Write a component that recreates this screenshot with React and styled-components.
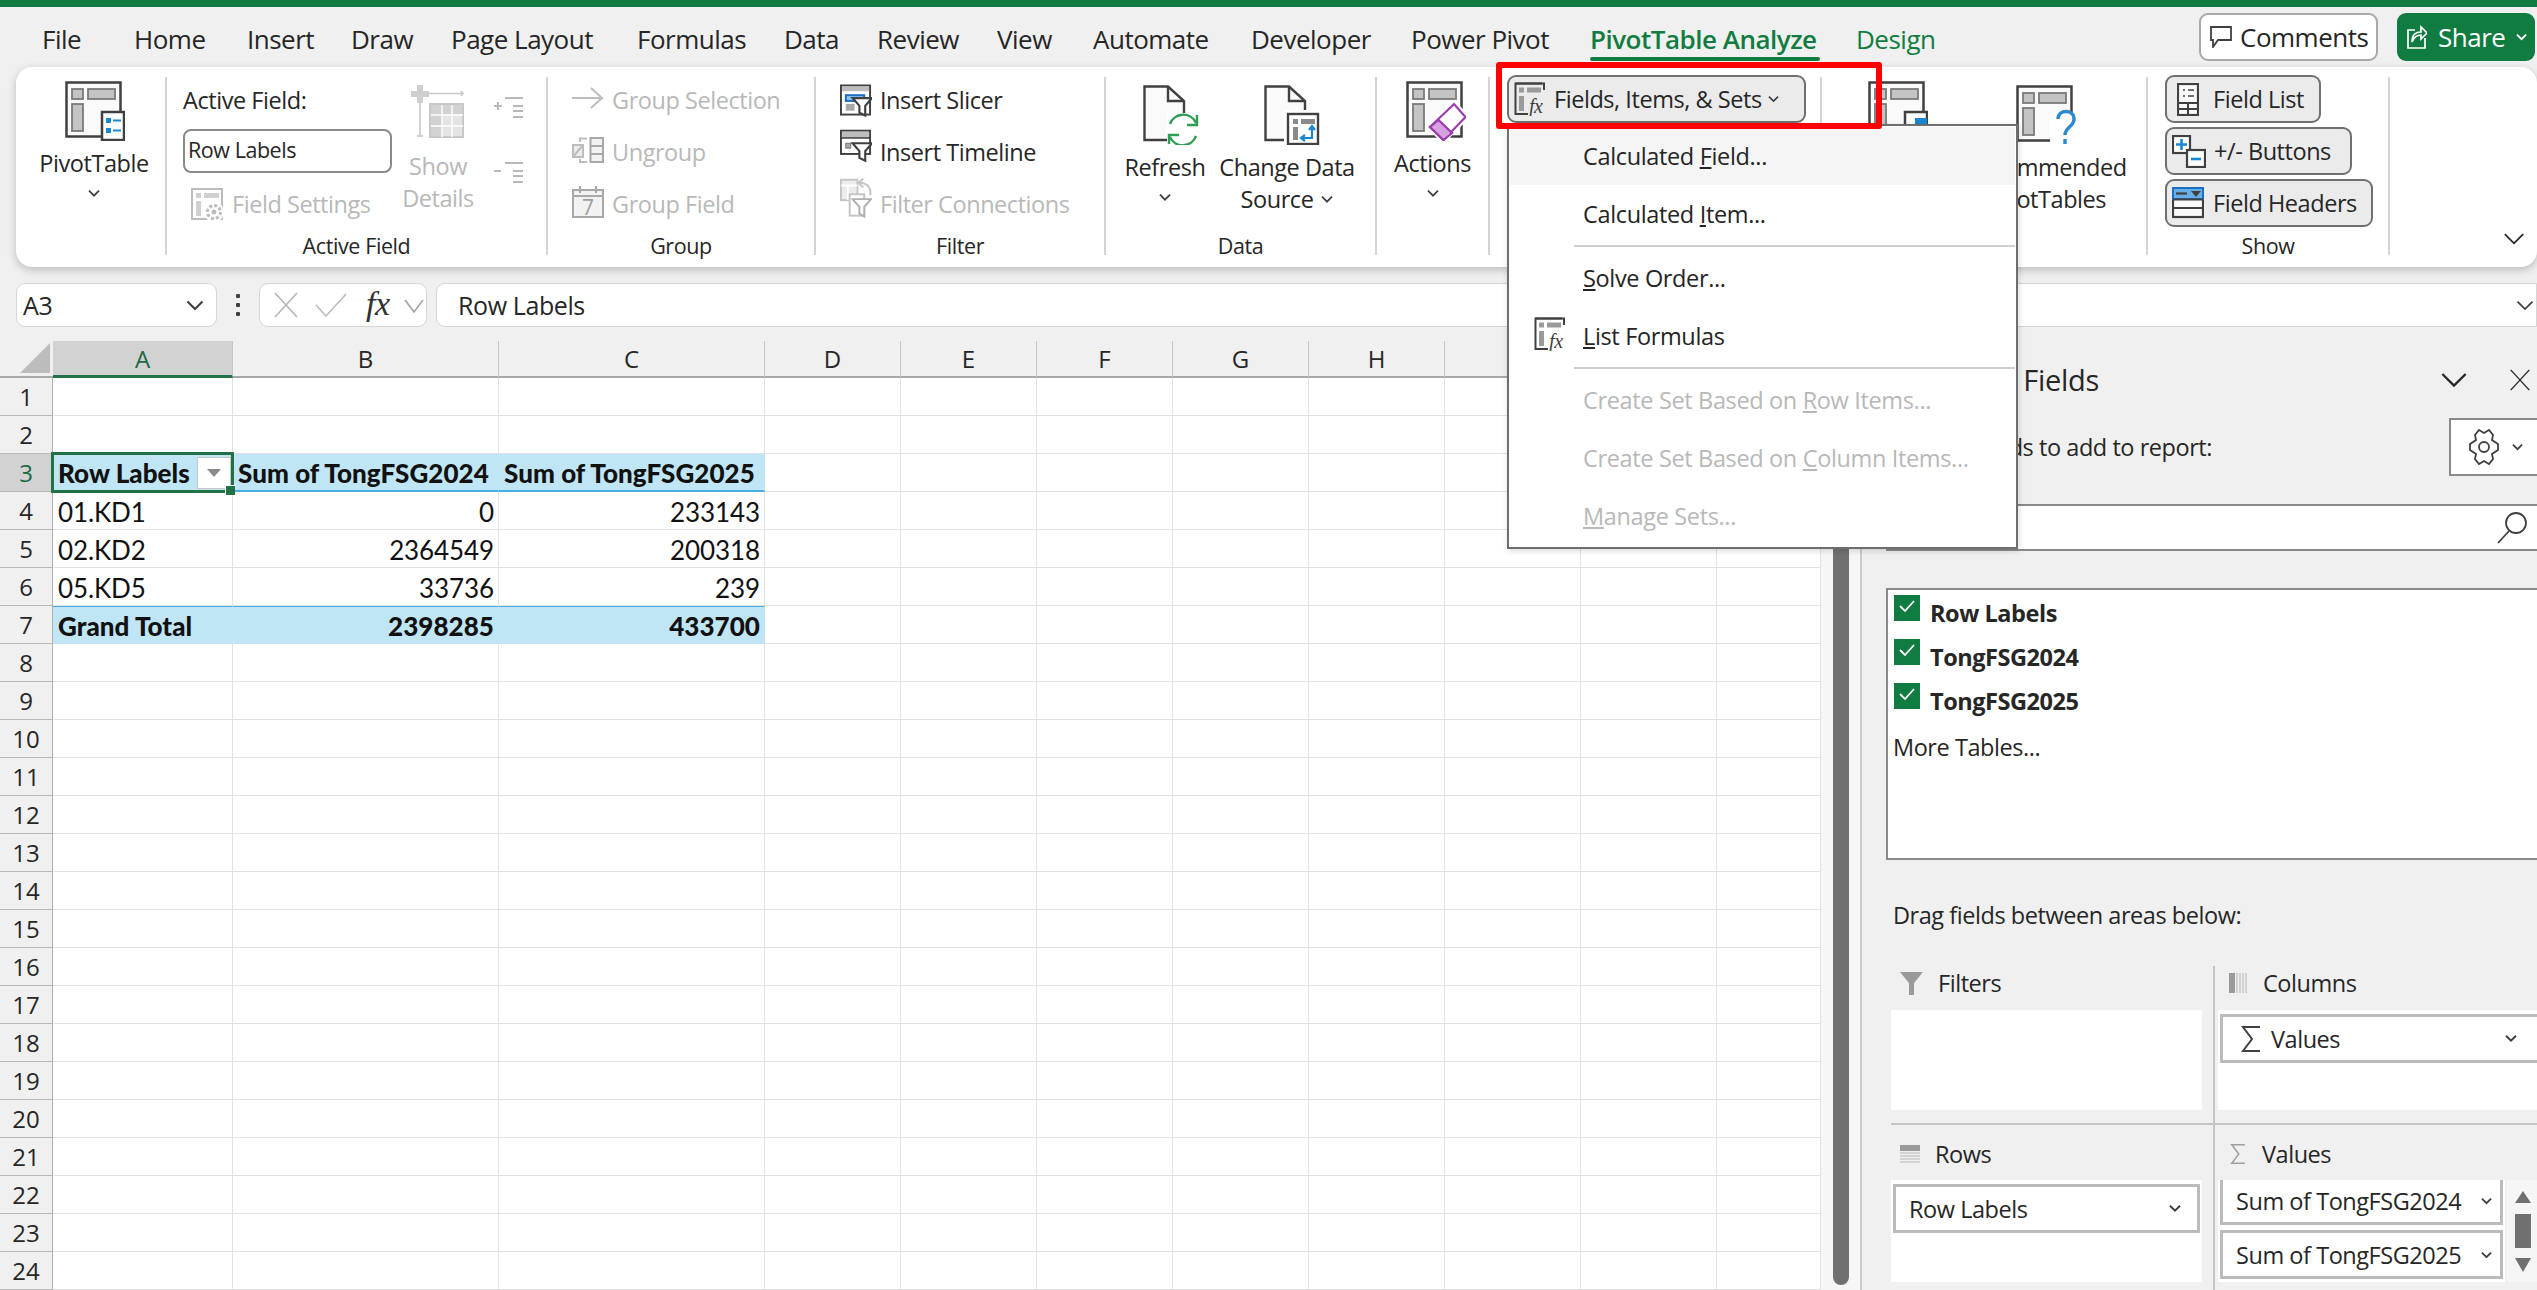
import React from 'react';
import styled, { createGlobalStyle } from 'styled-components';

const Global = createGlobalStyle`
  html, body { margin: 0; padding: 0; background: #f0f0f0; }
  body { font-family: "Open Sans", "Noto Sans", sans-serif; color: #262626; }
  * { box-sizing: border-box; }
`;

const Page = styled.div`
  position: relative;
  width: 2537px;
  height: 1290px;
  overflow: hidden;
  background: #f0f0f0;
  display: flex;
  flex-direction: column;
  font-size: 23.5px;
  letter-spacing: -0.45px;
  white-space: nowrap;
`;

const GreenBar = styled.div`
  height: 7px;
  background: #107c41;
`;

const TabRow = styled.div`
  height: 60px;
  display: flex;
  padding-left: 42px;
`;

const Tab = styled.div`
  position: relative;
  width: ${(p) => p.$w}px;
  height: 50px;
  line-height: 64px;
  font-size: 26px;
  letter-spacing: -0.5px;
  color: ${(p) => (p.$green ? '#107c41' : '#262626')};
  font-weight: ${(p) => (p.$active ? 600 : 400)};
  ${(p) =>
    p.$active &&
    `&::after {
      content: "";
      position: absolute;
      left: 0;
      top: 50px;
      width: 230px;
      height: 4px;
      border-radius: 2px;
      background: #107c41;
    }`}
`;

const TopActions = styled.div`
  margin-left: auto;
  display: flex;
  gap: 19px;
  padding: 6px 2px 0 0;
`;

const CommentsButton = styled.div`
  width: 179px;
  height: 48px;
  border: 2px solid #a8a8a8;
  border-radius: 9px;
  background: #fff;
  display: flex;
  align-items: center;
  gap: 8px;
  padding-left: 9px;
  font-size: 26px;
  letter-spacing: -0.5px;
`;

const ShareButton = styled(CommentsButton)`
  width: 138px;
  border: 0;
  background: #107c41;
  color: #fff;
  gap: 11px;
  padding-left: 10px;
`;

const Ribbon = styled.div`
  margin-left: 16px;
  height: 200px;
  display: flex;
  background: #fff;
  border-radius: 16px;
  box-shadow: 0 3px 8px rgba(0, 0, 0, 0.22);
  position: relative;
  z-index: 1;
`;

const Group = styled.div`
  width: ${(p) => p.$w}px;
  display: flex;
  flex-direction: column;
  position: relative;
  &::after {
    content: "";
    position: absolute;
    right: -1px;
    top: 10px;
    bottom: 12px;
    width: 2px;
    background: #d4d4d4;
  }
`;

const GroupBody = styled.div`
  height: 168px;
  padding: 8px 0 0 ${(p) => p.$pl || 0}px;
  display: flex;
  gap: ${(p) => p.$gap || 0}px;
  justify-content: ${(p) => (p.$center ? 'center' : 'flex-start')};
`;

const GroupLabel = styled.div`
  height: 24px;
  line-height: 22px;
  text-align: center;
  font-size: 21.5px;
  letter-spacing: -0.4px;
`;

const Column = styled.div`
  display: flex;
  flex-direction: column;
  width: ${(p) => (p.$w ? `${p.$w}px` : 'auto')};
`;

const RowButton = styled.div`
  height: 52px;
  padding: 0 0 2px ${(p) => p.$pl || 0}px;
  display: flex;
  align-items: center;
  gap: 8px;
  color: ${(p) => (p.$off ? '#b8b8b8' : 'inherit')};
`;

const IconSlot = styled.div`
  width: 32px;
  display: flex;
  justify-content: flex-start;
`;

const BigButton = styled.div`
  width: ${(p) => p.$w}px;
  margin-left: ${(p) => p.$ml || 0}px;
  display: flex;
  flex-direction: column;
  align-items: center;
  text-align: center;
  line-height: 32px;
  padding-top: ${(p) => p.$top || 0}px;
  color: ${(p) => (p.$off ? '#b8b8b8' : 'inherit')};
  svg.main {
    margin-bottom: ${(p) => p.$iconGap || 8}px;
    margin-left: ${(p) => p.$iconShift || 0}px;
  }
`;

const ChevronRow = styled.div`
  height: 28px;
  display: flex;
  align-items: center;
  justify-content: center;
`;

const InlineChevron = styled.span`
  display: inline-flex;
  align-items: center;
  gap: 8px;
`;

const FieldInput = styled.div`
  width: 209px;
  height: 44px;
  margin: 2px 0 6px;
  border: 2px solid #8a8a8a;
  border-radius: 8px;
  padding-left: 3px;
  line-height: 38px;
  font-size: 21.5px;
`;

const Stepper = styled.div`
  display: flex;
  flex-direction: column;
  gap: 43px;
  padding: 22px 0 0 18px;
`;

const OutlineButton = styled.div`
  width: ${(p) => p.$w}px;
  height: 48px;
  margin-bottom: 4px;
  border: 2px solid #707070;
  border-radius: 9px;
  background: #ebebeb;
  display: flex;
  align-items: center;
  padding-left: ${(p) => p.$pl}px;
  gap: ${(p) => p.$gap}px;
`;

const RibbonEnd = styled.div`
  flex: 1;
  display: flex;
  justify-content: flex-end;
  align-items: flex-end;
  padding: 0 12px 21px 0;
`;

const FormulaBar = styled.div`
  margin-top: 16px;
  height: 44px;
  display: flex;
  padding-left: 16px;
`;

const BarBox = styled.div`
  height: 44px;
  width: ${(p) => (p.$w ? `${p.$w}px` : 'auto')};
  flex: ${(p) => (p.$w ? 'none' : 1)};
  margin-left: ${(p) => p.$ml || 0}px;
  background: #fff;
  border: 1.5px solid #d6d6d6;
  border-radius: ${(p) => (p.$w ? '9px' : '9px 0 0 9px')};
  display: flex;
  align-items: center;
  justify-content: ${(p) => (p.$between ? 'space-between' : 'flex-start')};
  gap: ${(p) => p.$gap || 0}px;
  padding: 0 ${(p) => p.$pr || 0}px 0 ${(p) => p.$pl || 0}px;
  font-size: 25px;
  letter-spacing: -0.4px;
`;

const Dots = styled.div`
  width: 42px;
  display: flex;
  flex-direction: column;
  align-items: center;
  justify-content: center;
  gap: 5px;
  i { width: 4px; height: 4px; background: #404040; display: block; border-radius: 1px; }
`;

const Main = styled.div`
  margin-top: 14px;
  height: 949px;
  display: flex;
`;

const Sheet = styled.div`
  width: 1821px;
  flex: none;
  position: relative;
  display: grid;
  grid-template-columns: 53px 180px 266px 266px 136px 136px 136px 136px 136px 136px 136px 104px;
  grid-auto-rows: 38px;
  grid-template-rows: 37px;
  background: #fff;
  overflow: hidden;
  font-family: Lato, "Liberation Sans", sans-serif;
  font-size: 26px;
  letter-spacing: 0;
`;

const Corner = styled.div`
  background: #f0f0f0;
  border-bottom: 2px solid #a8a8a8;
  display: flex;
  align-items: flex-end;
  justify-content: flex-end;
  padding: 0 3px 3px 0;
`;

const ColHead = styled.div`
  background: ${(p) => (p.$on ? '#d2d2d2' : '#f0f0f0')};
  border-right: 1px solid #c6c6c6;
  border-bottom: ${(p) => (p.$on ? '3px solid #217346' : '2px solid #a8a8a8')};
  color: ${(p) => (p.$on ? '#1d6b41' : '#262626')};
  display: flex;
  align-items: center;
  justify-content: center;
  font-family: "Open Sans", sans-serif;
  font-size: 24px;
`;

const RowHead = styled.div`
  background: ${(p) => (p.$on ? '#d2d2d2' : '#f0f0f0')};
  border-right: 1px solid #b0b0b0;
  border-bottom: 1px solid #b8b8b8;
  color: ${(p) => (p.$on ? '#1d6b41' : '#262626')};
  display: flex;
  align-items: center;
  justify-content: center;
  font-family: "Open Sans", sans-serif;
  font-size: 24px;
`;

const Cell = styled.div`
  position: relative;
  border-right: 1px solid ${(p) => (p.$fill ? '#c0e6f5' : '#e2e2e2')};
  border-bottom: ${(p) => (p.$blueBottom ? '2px solid #45b0e1' : `1px solid ${p.$fill ? '#c0e6f5' : '#e2e2e2'}`)};
  border-top: ${(p) => (p.$blueTop ? '1px solid #45b0e1' : 0)};
  background: ${(p) => (p.$fill ? '#c0e6f5' : '#fff')};
  font-weight: ${(p) => (p.$bold ? 900 : 400)};
  letter-spacing: ${(p) => (p.$bold ? '0.05px' : '-0.1px')};
  display: flex;
  align-items: center;
  justify-content: ${(p) => (p.$right ? 'flex-end' : 'flex-start')};
  padding: 2px 4px 0 5px;
  color: #111;
`;

const Selection = styled.div`
  position: absolute;
  inset: -2px -2px -3px -2px;
  border: 3px solid #217346;
  z-index: 2;
  pointer-events: none;
  &::after {
    content: "";
    position: absolute;
    right: -4px;
    bottom: -5px;
    width: 9px;
    height: 9px;
    background: #217346;
    border: 1px solid #fff;
    border-right: 0;
    border-bottom: 0;
  }
`;

const FilterDrop = styled.div`
  margin-left: auto;
  margin-right: -3px;
  width: 34px;
  height: 32px;
  background: #fff;
  border: 1.5px solid #c8c8c8;
  display: flex;
  align-items: center;
  justify-content: center;
  &::before {
    content: "";
    border-left: 7px solid transparent;
    border-right: 7px solid transparent;
    border-top: 8px solid #8a8a8a;
  }
`;

const ScrollStrip = styled.div`
  width: 39px;
  flex: none;
  background: #f6f6f6;
  padding-left: 12px;
`;

const ScrollThumb = styled.div`
  width: 16px;
  height: 944px;
  background: #707070;
  border-radius: 8px;
`;

const Pane = styled.div`
  flex: 1;
  min-width: 0;
  overflow: hidden;
  border-left: 2px solid #cbcbcb;
  padding-left: 24px;
  display: flex;
  flex-direction: column;
`;

const PaneTitle = styled.div`
  height: 77px;
  display: flex;
  align-items: center;
`;

const TitleText = styled.div`
  width: 213px;
  display: flex;
  justify-content: flex-end;
  font-size: 29px;
  letter-spacing: -0.3px;
`;

const PaneTools = styled.div`
  margin-left: auto;
  display: flex;
  align-items: center;
  gap: 41px;
  padding-right: 6px;
`;

const ChooseRow = styled.div`
  height: 58px;
  display: flex;
  align-items: center;
  justify-content: space-between;
  margin-right: -30px;
`;

const ChooseText = styled.div`
  width: 326px;
  display: flex;
  justify-content: flex-end;
`;

const GearBox = styled.div`
  width: 118px;
  height: 58px;
  border: 2px solid #8a8a8a;
  background: #fff;
  display: flex;
  align-items: center;
  padding-left: 17px;
  gap: 12px;
`;

const SearchBox = styled.div`
  margin: 28px -10px 0 0;
  height: 47px;
  border: 2px solid #8a8a8a;
  background: #fff;
  display: flex;
  align-items: center;
  justify-content: flex-end;
  padding-right: 17px;
`;

const FieldList = styled.div`
  margin: 37px -10px 0 0;
  height: 272px;
  border: 2px solid #8a8a8a;
  background: #fff;
  padding: 5px 0 0 6px;
`;

const FieldRow = styled.div`
  height: 44px;
  display: flex;
  gap: 10px;
  font-weight: 700;
  font-size: 23.5px;
`;

const Check = styled.div`
  width: 26px;
  height: 26px;
  background: #107c41;
  display: flex;
  align-items: center;
  justify-content: center;
  padding-bottom: 5px;
`;

const FieldName = styled.div`
  padding-top: 3px;
  line-height: 30px;
`;

const MoreTables = styled.div`
  margin: 4px 0 0 -1px;
  line-height: 32px;
`;

const DragText = styled.div`
  height: 106px;
  padding: 39px 0 0 7px;
  line-height: 32px;
`;

const Areas = styled.div`
  margin-left: 5px;
  margin-right: -10px;
  display: grid;
  grid-template-columns: 324px 1fr;
  grid-template-rows: 157px 1fr;
  height: 324px;
`;

const AreaCell = styled.div`
  border-right: ${(p) => (p.$left ? '2px solid #c4c4c4' : 0)};
  border-top: ${(p) => (p.$low ? '2px solid #c4c4c4' : 0)};
  padding-left: ${(p) => (p.$left ? 0 : 3)}px;
`;

const AreaHead = styled.div`
  height: ${(p) => (p.$low ? 55 : 44)}px;
  padding: ${(p) => (p.$low ? 3 : 0)}px 0 ${(p) => (p.$low ? 0 : 10)}px ${(p) => (p.$left ? 9 : 11)}px;
  display: flex;
  align-items: center;
  gap: 15px;
  svg { flex: none; }
`;

const AreaBox = styled.div`
  width: ${(p) => p.$w}px;
  height: ${(p) => p.$h}px;
  background: #fff;
  padding: ${(p) => (p.$clip ? 0 : 4)}px 2px 0;
`;

const AreaItem = styled.div`
  height: ${(p) => p.$h || 49}px;
  margin-bottom: ${(p) => (p.$gap ? 5 : 0)}px;
  border: 3px solid #bbb;
  border-top-width: ${(p) => (p.$clip ? 0 : 3)}px;
  background: #fff;
  display: flex;
  align-items: center;
  padding: 0 ${(p) => p.$pr || 16}px 0 ${(p) => p.$pl || 13}px;
  gap: 10px;
  span { margin-right: auto; }
`;

const ValuesWrap = styled.div`
  display: flex;
  align-items: flex-start;
`;

const MiniScroll = styled.div`
  width: 32px;
  height: 102px;
  background: #f5f5f5;
  margin-left: 2px;
  display: flex;
  flex-direction: column;
  align-items: flex-start;
  padding: 11px 0 0 8px;
`;

const MiniThumb = styled.div`
  width: 16px;
  height: 34px;
  margin: 11px 0 10px;
  background: #707070;
`;

const Arrow = styled.div`
  width: 0;
  height: 0;
  border-left: 8px solid transparent;
  border-right: 8px solid transparent;
  ${(p) => (p.$up ? 'border-bottom: 12px solid #707070;' : 'border-top: 14px solid #707070;')}
`;

const RedMark = styled.div`
  position: absolute;
  left: 1496px;
  top: 62px;
  width: 386px;
  height: 67px;
  border: 6px solid #ff0000;
  border-radius: 3px;
  z-index: 4;
  pointer-events: none;
`;

const Menu = styled.div`
  position: absolute;
  left: 1507px;
  top: 124px;
  width: 511px;
  height: 425px;
  background: #fff;
  border: 2px solid #6e6e6e;
  padding: 1px;
  z-index: 3;
  box-shadow: 1px 2px 6px rgba(0, 0, 0, 0.15);
`;

const MenuItem = styled.div`
  height: 58px;
  display: flex;
  align-items: center;
  padding-left: 73px;
  position: relative;
  background: ${(p) => (p.$hover ? '#f5f5f5' : 'transparent')};
  color: ${(p) => (p.$off ? '#b8b8b8' : '#242424')};
  font-size: 23.5px;
  letter-spacing: -0.35px;
`;

const MenuIcon = styled.div`
  position: absolute;
  left: 24px;
  top: 10px;
  display: flex;
`;

const MenuSep = styled.div`
  height: 6px;
  margin-left: 64px;
  display: flex;
  align-items: center;
  &::before {
    content: "";
    flex: 1;
    height: 2px;
    background: #cfcfcf;
  }
`;

const Chevron = ({ size = 12, color = '#404040', w = 1.8 }) => (
  <svg width={size} height={size * 0.7} viewBox="0 0 12 8" fill="none" stroke={color} strokeWidth={w}>
    <path d="M1 1.5 L6 6.5 L11 1.5" />
  </svg>
);

const FxText = ({ x, y, size, color = '#404040' }) => (
  <text x={x} y={y} fontFamily="Liberation Serif, serif" fontStyle="italic" fontSize={size} fill={color}>
    fx
  </text>
);

// frame used by the big table-like icons
const LayoutFrame = ({ children, className = 'main', w = 60, h = 60 }) => (
  <svg className={className} width={w} height={h} viewBox="0 0 60 60">
    <rect x="1.5" y="1.5" width="54" height="54" fill="#fafafa" stroke="#404040" strokeWidth="2.5" />
    <rect x="7" y="8" width="11" height="10" fill="#c4c4c4" stroke="#7a7a7a" strokeWidth="1.8" />
    <rect x="23" y="8" width="27" height="10" fill="#c4c4c4" stroke="#7a7a7a" strokeWidth="1.8" />
    <rect x="7" y="23" width="11" height="27" fill="#c4c4c4" stroke="#7a7a7a" strokeWidth="1.8" />
    {children}
  </svg>
);

const PivotTableIcon = () => (
  <LayoutFrame>
    <rect x="37" y="31" width="22" height="28" fill="#fff" stroke="#404040" strokeWidth="2.5" />
    <rect x="41" y="37" width="5" height="5" fill="#1b87d0" />
    <rect x="48" y="38.5" width="8" height="2" fill="#1b87d0" />
    <rect x="41" y="47" width="5" height="5" fill="#1b87d0" />
    <rect x="48" y="48.5" width="8" height="2" fill="#1b87d0" />
  </LayoutFrame>
);

const ActionsIcon = () => (
  <LayoutFrame>
    <path d="M24 46 L48 23 L60 36 L37.5 59 Z" fill="#fff" stroke="#fff" strokeWidth="6" />
    <path d="M24 46 L48 23 L59.5 36 L37.5 59 Z" fill="#fff" stroke="#9b3bb0" strokeWidth="2.2" />
    <path d="M24 46 L32.5 39 L46 52 L37.5 59 Z" fill="#d6a3e0" stroke="#9b3bb0" strokeWidth="2.2" />
  </LayoutFrame>
);

const RecommendIcon = () => (
  <LayoutFrame>
    <rect x="34" y="28" width="26" height="32" fill="#fff" stroke="none" />
    <path
      d="M42 34 C42 24 58 24 58 34 C58 42 49 42 49 50 M49 54 V59"
      fill="none"
      stroke="#2a8ad0"
      strokeWidth="3.4"
    />
  </LayoutFrame>
);

const PivotChartIcon = () => (
  <LayoutFrame>
    <rect x="37" y="31" width="22" height="28" fill="#fff" stroke="#404040" strokeWidth="2.5" />
    <rect x="47" y="37" width="12" height="8" fill="#1b87d0" />
  </LayoutFrame>
);

const ShowDetailsIcon = () => (
  <svg className="main" width="54" height="54" viewBox="0 0 54 54">
    <path d="M6 0 H12 V6 H18 V12 H12 V18 H6 V12 H0 V6 H6 Z" fill="#cfcfcf" />
    <path d="M18 8.5 H52 M50 6 L52 8.5 L50 11 M9 18 V52 M6 51 H12" stroke="#c8c8c8" strokeWidth="1.6" fill="none" />
    <rect x="19" y="19" width="33" height="33" fill="#e4e4e4" stroke="#c8c8c8" strokeWidth="2" />
    <rect x="20" y="20" width="11" height="31" fill="#d2d2d2" />
    <rect x="20" y="20" width="31" height="10" fill="#d2d2d2" />
    <path d="M31 20 V52 M41 20 V52 M20 30 H52 M20 41 H52" stroke="#fff" strokeWidth="1.4" />
  </svg>
);

const OutlineStep = ({ plus }) => (
  <svg width="30" height="22" viewBox="0 0 30 22" stroke="#b8b8b8" strokeWidth="2" fill="none">
    {plus ? <path d="M0 9 H8 M4 5 V13" /> : <path d="M0 9 H7" />}
    <path d="M11 1 H29 M19 9 H29 M19 14 H29 M19 20 H29" />
  </svg>
);

const FieldSettingsIcon = () => (
  <svg width="33" height="33" viewBox="0 0 33 33">
    <rect x="1" y="1" width="30" height="30" fill="#fff" stroke="#bcbcbc" strokeWidth="2" />
    <rect x="5" y="5" width="5" height="5" fill="#d0d0d0" />
    <rect x="13" y="5" width="15" height="5" fill="#d0d0d0" />
    <rect x="5" y="13" width="5" height="15" fill="#d0d0d0" />
    <circle cx="23" cy="24" r="10" fill="#fff" />
    <circle cx="23" cy="24" r="6.5" fill="#fff" stroke="#bcbcbc" strokeWidth="3" strokeDasharray="3 2" />
    <circle cx="23" cy="24" r="2.5" fill="#bcbcbc" />
  </svg>
);

const GroupArrowIcon = () => (
  <svg width="32" height="27" viewBox="0 0 32 27" fill="none" stroke="#bdbdbd" strokeWidth="2">
    <path d="M0 11 H30 M19 1 L30 11 L19 21" />
  </svg>
);

const UngroupIcon = () => (
  <svg width="32" height="30" viewBox="0 0 32 30" fill="none" stroke="#bdbdbd" strokeWidth="2">
    <rect x="1" y="8" width="10" height="12" fill="#ececec" />
    <path d="M1 20 L11 8" />
    <path d="M15 1.5 H8 V5 M8 22 V25 H15" />
    <rect x="18.5" y="1" width="12.5" height="24" fill="#f2f2f2" stroke="#a8a8a8" />
    <path d="M18.5 9 H31 M18.5 17 H31" stroke="#a8a8a8" />
  </svg>
);

const GroupFieldIcon = () => (
  <svg width="32" height="36" viewBox="0 0 32 36">
    <rect x="1" y="4" width="30" height="27" fill="#f2f2f2" stroke="#a8a8a8" strokeWidth="2" />
    <path d="M1 10 H31 M8 0 V7 M24 0 V7" stroke="#a8a8a8" strokeWidth="2" />
    <text x="10" y="29" fontSize="21" fill="#9e9e9e" fontFamily="Open Sans, sans-serif">7</text>
  </svg>
);

const Funnel = ({ y }) => (
  <path
    d={`M13 ${y} H33 L26 ${y + 8} V${y + 18} L20 ${y + 15} V${y + 8} Z`}
    fill="#fff"
    stroke="#404040"
    strokeWidth="2.2"
  />
);

const SlicerIcon = () => (
  <svg width="33" height="33" viewBox="0 0 33 33">
    <rect x="1" y="1" width="30" height="30" fill="#fff" stroke="#404040" strokeWidth="2" />
    <rect x="2" y="2" width="28" height="5" fill="#bdbdbd" />
    <rect x="6" y="11" width="19" height="6" fill="#8cc0f0" stroke="#1a6fc0" strokeWidth="2" />
    <rect x="6" y="20" width="9" height="7" fill="#a8a8a8" />
    <Funnel y={14} />
  </svg>
);

const TimelineIcon = () => (
  <svg width="33" height="47" viewBox="0 0 33 47">
    <rect x="1" y="1" width="30" height="24" fill="#fff" stroke="#404040" strokeWidth="2" />
    <rect x="2" y="2" width="28" height="6" fill="#bdbdbd" />
    <path d="M1 8.5 H31" stroke="#404040" strokeWidth="1.6" />
    <rect x="6" y="14" width="5" height="5" fill="#a8a8a8" stroke="#707070" strokeWidth="1" />
    <Funnel y={14} />
  </svg>
);

const FilterConnectionsIcon = () => (
  <svg width="33" height="52" viewBox="0 0 33 52" fill="none" stroke="#c4c4c4" strokeWidth="2">
    <rect x="1" y="1" width="17" height="21" fill="#ececec" />
    <path d="M1 7 H18 M8 7 V22" stroke="#fff" />
    <path d="M20 4 C28 4 33 10 31 17 M24 0 L19 4 L24 9" />
    <rect x="10" y="16" width="15" height="22" fill="#fff" />
    <path d="M13 21 H32 L25 29 V39 L20 36 V29 Z" fill="#fff" stroke="#b0b0b0" />
  </svg>
);

const DocShape = () => (
  <>
    <path d="M1.5 55 V1.5 H25 L41 16 V28 H24 V55 Z" fill="#fafafa" stroke="none" />
    <path d="M24 55 H1.5 V1.5 H25 L41 16 V28" fill="none" stroke="#404040" strokeWidth="2.4" />
    <path d="M25 1.5 V16 H41" fill="none" stroke="#404040" strokeWidth="2.4" />
  </>
);

const RefreshIcon = () => (
  <svg className="main" width="56" height="60" viewBox="0 0 56 60">
    <DocShape />
    <circle cx="40" cy="45" r="17" fill="#fff" />
    <path d="M27 39 A14 14 0 0 1 53 38 M54 30 V40 H44" fill="none" stroke="#2f9e55" strokeWidth="2.4" />
    <path d="M53 51 A14 14 0 0 1 27 52 M26 59 V50 H36" fill="none" stroke="#2f9e55" strokeWidth="2.4" />
  </svg>
);

const ChangeDataIcon = () => (
  <svg className="main" width="56" height="60" viewBox="0 0 56 60">
    <DocShape />
    <rect x="20" y="25" width="36" height="35" fill="#fff" />
    <rect x="24" y="29" width="30" height="30" fill="#fff" stroke="#404040" strokeWidth="2.4" />
    <rect x="29" y="34" width="5" height="5" fill="#8a8a8a" />
    <rect x="37" y="34" width="14" height="5" fill="#8a8a8a" />
    <rect x="29" y="42" width="5" height="13" fill="#8a8a8a" />
    <path d="M48 42 V53 H38 M45 45 L48 41 L51 45 M41 50 L37 53 L41 56" fill="none" stroke="#1b87d0" strokeWidth="2.2" />
  </svg>
);

const FieldsFxIcon = () => (
  <svg width="34" height="34" viewBox="0 0 34 34">
    <path d="M28 1.5 H1.5 V32 H14" fill="none" stroke="#404040" strokeWidth="2" />
    <path d="M1.5 1.5 H30 V8" fill="none" stroke="#404040" strokeWidth="2" />
    <rect x="5" y="5.5" width="5" height="5" fill="#9a9a9a" />
    <rect x="13" y="5.5" width="14" height="5" fill="#9a9a9a" />
    <rect x="5" y="14" width="5" height="15" fill="#9a9a9a" />
    <FxText x="15" y="31" size="20" />
  </svg>
);

const FieldListIcon = () => (
  <svg width="22" height="33" viewBox="0 0 22 33">
    <rect x="1" y="1" width="20" height="31" fill="#fafafa" stroke="#404040" strokeWidth="2.2" />
    <path d="M6 7 H8 M11 7 H17 M6 13 H8 M11 13 H17" stroke="#707070" strokeWidth="2" />
    <path d="M1 20 H21 M1 26 H21 M11 20 V32" stroke="#404040" strokeWidth="2" />
  </svg>
);

const PlusMinusIcon = () => (
  <svg width="34" height="33" viewBox="0 0 34 33">
    <rect x="1" y="1" width="17" height="17" fill="#fff" stroke="#404040" strokeWidth="2.2" />
    <path d="M4 9.5 H15 M9.5 4 V15" stroke="#1b87d0" strokeWidth="2.6" />
    <rect x="15" y="15" width="18" height="17" fill="#fff" stroke="#404040" strokeWidth="2.2" />
    <path d="M19 24 H29" stroke="#1b87d0" strokeWidth="2.6" />
  </svg>
);

const FieldHeadersIcon = () => (
  <svg width="32" height="32" viewBox="0 0 32 32">
    <rect x="1" y="1" width="30" height="29" fill="#fafafa" stroke="#404040" strokeWidth="2.2" />
    <rect x="1" y="1" width="30" height="11" fill="#6aaee8" stroke="#1a6fc0" strokeWidth="2" />
    <path d="M4 6.5 H15" stroke="#404040" strokeWidth="2.2" />
    <path d="M19 4 H29 L24 10 Z" fill="#404040" />
    <path d="M1 12.5 H31 M1 21 H31" stroke="#404040" strokeWidth="2" />
  </svg>
);

const XIcon = ({ size = 26, color = '#b5b5b5', w = 1.6 }) => (
  <svg width={size} height={size} viewBox="0 0 26 26" fill="none" stroke={color} strokeWidth={w}>
    <path d="M2 1 L24 25 M24 1 L2 25" />
  </svg>
);

const CheckIcon = () => (
  <svg width="32" height="24" viewBox="0 0 32 24" fill="none" stroke="#bcbcbc" strokeWidth="1.6">
    <path d="M1 12 L11 23 L31 1" />
  </svg>
);

const SigmaIcon = ({ color = '#404040', w = 20, h = 26 }) => (
  <svg width={w} height={h} viewBox="0 0 20 26" fill="none" stroke={color} strokeWidth="2">
    <path d="M19 1 H2 L11 13 L2 25 H19" />
  </svg>
);

const tabs = [
  ['File', 92],
  ['Home', 113],
  ['Insert', 104],
  ['Draw', 100],
  ['Page Layout', 186],
  ['Formulas', 147],
  ['Data', 93],
  ['Review', 120],
  ['View', 96],
  ['Automate', 158],
  ['Developer', 160],
  ['Power Pivot', 179],
  ['PivotTable Analyze', 266, true, true],
  ['Design', 90, true],
];

const cols = ['A', 'B', 'C', 'D', 'E', 'F', 'G', 'H', 'I', 'J', 'K'];

const rowData = {
  3: { fill: true, bold: true, blueBottom: true, cells: ['Row Labels', 'Sum of TongFSG2024', 'Sum of TongFSG2025'] },
  4: { cells: ['01.KD1', '0', '233143'] },
  5: { cells: ['02.KD2', '2364549', '200318'] },
  6: { cells: ['05.KD5', '33736', '239'] },
  7: { fill: true, bold: true, blueTop: true, cells: ['Grand Total', '2398285', '433700'] },
};

const SheetGrid = () => (
  <Sheet>
    <Corner>
      <svg width="30" height="30" viewBox="0 0 30 30">
        <path d="M30 0 V30 H0 Z" fill="#bcbcbc" />
      </svg>
    </Corner>
    {cols.map((c, i) => (
      <ColHead key={c} $on={i === 0}>{c}</ColHead>
    ))}
    {Array.from({ length: 24 }, (_, r) => {
      const num = r + 1;
      const row = rowData[num] || { cells: [] };
      return (
        <React.Fragment key={num}>
          <RowHead $on={num === 3}>{num}</RowHead>
          {cols.map((c, i) => {
            const inTable = i < 3 && rowData[num];
            const text = row.cells[i];
            return (
              <Cell
                key={c}
                $fill={inTable && row.fill}
                $bold={inTable && row.bold}
                $blueBottom={inTable && row.blueBottom}
                $blueTop={inTable && row.blueTop}
                $right={i > 0 && num !== 3}
              >
                {num === 3 && i === 0 && <Selection />}
                {text}
                {num === 3 && i === 0 && <FilterDrop />}
              </Cell>
            );
          })}
        </React.Fragment>
      );
    })}
  </Sheet>
);

const MenuPopup = () => (
  <Menu>
    <MenuItem $hover>
      <span>Calculated <u>F</u>ield...</span>
    </MenuItem>
    <MenuItem>
      <span>Calculated <u>I</u>tem...</span>
    </MenuItem>
    <MenuSep />
    <MenuItem>
      <span><u>S</u>olve Order...</span>
    </MenuItem>
    <MenuItem>
      <MenuIcon><FieldsFxIcon /></MenuIcon>
      <span><u>L</u>ist Formulas</span>
    </MenuItem>
    <MenuSep />
    <MenuItem $off>
      <span>Create Set Based on <u>R</u>ow Items...</span>
    </MenuItem>
    <MenuItem $off>
      <span>Create Set Based on <u>C</u>olumn Items...</span>
    </MenuItem>
    <MenuItem $off>
      <span><u>M</u>anage Sets...</span>
    </MenuItem>
  </Menu>
);

const FieldsPane = () => (
  <Pane>
    <PaneTitle>
      <TitleText>PivotTable Fields</TitleText>
      <PaneTools>
        <Chevron size={28} w={1} color="#262626" />
        <XIcon size={22} color="#262626" w={1.6} />
      </PaneTools>
    </PaneTitle>
    <ChooseRow>
      <ChooseText>Choose fields to add to report:</ChooseText>
      <GearBox>
        <svg width="32" height="40" viewBox="0 0 32 40" fill="none" stroke="#404040" strokeWidth="1.8">
          <path d="M11 3 L16 6 L21 3 L25 8 L24 13 L30 17 V23 L24 27 L25 32 L21 37 L16 34 L11 37 L7 32 L8 27 L2 23 V17 L8 13 L7 8 Z" />
          <circle cx="16" cy="20" r="5" />
        </svg>
        <Chevron size={11} w={2} />
      </GearBox>
    </ChooseRow>
    <SearchBox>
      <svg width="32" height="32" viewBox="0 0 32 32" fill="none" stroke="#404040" strokeWidth="1.8">
        <circle cx="20" cy="11" r="10" />
        <path d="M13 19 L2 31" />
      </svg>
    </SearchBox>
    <FieldList>
      {['Row Labels', 'TongFSG2024', 'TongFSG2025'].map((f) => (
        <FieldRow key={f}>
          <Check>
            <svg width="16" height="12" viewBox="0 0 16 12" fill="none" stroke="#fff" strokeWidth="1.8">
              <path d="M1 6 L6 11 L15 1" />
            </svg>
          </Check>
          <FieldName>{f}</FieldName>
        </FieldRow>
      ))}
      <MoreTables>More Tables...</MoreTables>
    </FieldList>
    <DragText>Drag fields between areas below:</DragText>
    <Areas>
      <AreaCell $left>
        <AreaHead $left>
          <svg width="23" height="23" viewBox="0 0 23 23"><path d="M0 0 H23 L14 11 V23 H9 V11 Z" fill="#9a9a9a" /></svg>
          Filters
        </AreaHead>
        <AreaBox $w={311} $h={100} />
      </AreaCell>
      <AreaCell>
        <AreaHead>
          <svg width="19" height="20" viewBox="0 0 19 20">
            <rect x="0" y="0" width="6" height="20" fill="#9a9a9a" />
            <path d="M8 0 V20 M11 0 V20 M14 0 V20 M17 0 V20" stroke="#b4b4b4" strokeWidth="1" />
          </svg>
          Columns
        </AreaHead>
        <AreaBox $w={340} $h={100}>
          <AreaItem $pl={18} $pr={36}>
            <SigmaIcon />
            <span>Values</span>
            <Chevron size={12} w={2} />
          </AreaItem>
        </AreaBox>
      </AreaCell>
      <AreaCell $left $low>
        <AreaHead $left $low>
          <svg width="20" height="19" viewBox="0 0 20 19">
            <rect x="0" y="0" width="20" height="6" fill="#9a9a9a" />
            <path d="M0 8 H20 M0 11 H20 M0 14 H20 M0 17 H20" stroke="#b4b4b4" strokeWidth="1" />
          </svg>
          Rows
        </AreaHead>
        <AreaBox $w={311} $h={102}>
          <AreaItem>
            <span>Row Labels</span>
            <Chevron size={12} w={2} />
          </AreaItem>
        </AreaBox>
      </AreaCell>
      <AreaCell $low>
        <AreaHead $low>
          <SigmaIcon color="#a0a0a0" w={18} h={20} />
          Values
        </AreaHead>
        <ValuesWrap>
          <AreaBox $w={287} $h={102} $clip>
            <AreaItem $h={45} $clip $gap $pr={8} $pl={13}>
              <span>Sum of TongFSG2024</span>
              <Chevron size={11} w={2} />
            </AreaItem>
            <AreaItem $pr={8} $pl={13}>
              <span>Sum of TongFSG2025</span>
              <Chevron size={11} w={2} />
            </AreaItem>
          </AreaBox>
          <MiniScroll>
            <Arrow $up />
            <MiniThumb />
            <Arrow />
          </MiniScroll>
        </ValuesWrap>
      </AreaCell>
    </Areas>
  </Pane>
);

export default function App() {
  return (
    <>
      <Global />
      <Page>
        <GreenBar />
        <TabRow>
          {tabs.map(([name, w, green, active]) => (
            <Tab key={name} $w={w} $green={green} $active={active}>{name}</Tab>
          ))}
          <TopActions>
            <CommentsButton>
              <svg width="22" height="22" viewBox="0 0 22 22" fill="none" stroke="#404040" strokeWidth="1.8">
                <path d="M1 1 H21 V14 H8 L3 21 V14 H1 Z" />
              </svg>
              Comments
            </CommentsButton>
            <ShareButton>
              <svg width="20" height="24" viewBox="0 0 20 24" fill="none" stroke="#fff" strokeWidth="1.7">
                <path d="M8 5 H1 V23 H18 V13 M5 17 C5 9 9 7 14 7 V2 L20 8 L14 14 V10 C10 10 7 12 5 17 Z" />
              </svg>
              Share
              <Chevron size={11} color="#fff" w={2} />
            </ShareButton>
          </TopActions>
        </TabRow>

        <Ribbon>
          <Group $w={150}>
            <GroupBody $pl={13}>
              <BigButton $w={130} $top={6} $iconGap={6} $iconShift={2}>
                <PivotTableIcon />
                PivotTable
                <ChevronRow><Chevron /></ChevronRow>
              </BigButton>
            </GroupBody>
          </Group>

          <Group $w={381}>
            <GroupBody $pl={17}>
              <Column $w={209}>
                <RowButton>Active Field:</RowButton>
                <FieldInput>Row Labels</FieldInput>
                <RowButton $off $pl={8}>
                  <FieldSettingsIcon />
                  Field Settings
                </RowButton>
              </Column>
              <BigButton $w={76} $ml={8} $top={10} $iconGap={11} $off>
                <ShowDetailsIcon />
                Show
                <br />
                Details
              </BigButton>
              <Stepper>
                <OutlineStep plus />
                <OutlineStep />
              </Stepper>
            </GroupBody>
            <GroupLabel>Active Field</GroupLabel>
          </Group>

          <Group $w={268}>
            <GroupBody $pl={25}>
              <Column>
                <RowButton $off><IconSlot><GroupArrowIcon /></IconSlot>Group Selection</RowButton>
                <RowButton $off><IconSlot><UngroupIcon /></IconSlot>Ungroup</RowButton>
                <RowButton $off><IconSlot><GroupFieldIcon /></IconSlot>Group Field</RowButton>
              </Column>
            </GroupBody>
            <GroupLabel>Group</GroupLabel>
          </Group>

          <Group $w={290}>
            <GroupBody $pl={25}>
              <Column>
                <RowButton><IconSlot><SlicerIcon /></IconSlot>Insert Slicer</RowButton>
                <RowButton><IconSlot><TimelineIcon /></IconSlot>Insert Timeline</RowButton>
                <RowButton $off><IconSlot><FilterConnectionsIcon /></IconSlot>Filter Connections</RowButton>
              </Column>
            </GroupBody>
            <GroupLabel>Filter</GroupLabel>
          </Group>

          <Group $w={271}>
            <GroupBody $pl={15} $gap={2}>
              <BigButton $w={90} $top={10} $iconGap={6} $iconShift={12}>
                <RefreshIcon />
                Refresh
                <ChevronRow><Chevron /></ChevronRow>
              </BigButton>
              <BigButton $w={150} $top={10} $iconGap={6} $iconShift={10}>
                <ChangeDataIcon />
                Change Data
                <InlineChevron>Source <Chevron /></InlineChevron>
              </BigButton>
            </GroupBody>
            <GroupLabel>Data</GroupLabel>
          </Group>

          <Group $w={113}>
            <GroupBody $center>
              <BigButton $w={110} $top={6} $iconGap={6} $iconShift={6}>
                <ActionsIcon />
                Actions
                <ChevronRow><Chevron /></ChevronRow>
              </BigButton>
            </GroupBody>
          </Group>

          <Group $w={332}>
            <GroupBody $pl={18}>
              <OutlineButton $w={299} $pl={5} $gap={6}>
                <FieldsFxIcon />
                Fields, Items, &amp; Sets
                <Chevron size={11} w={1.8} />
              </OutlineButton>
            </GroupBody>
          </Group>

          <Group $w={326}>
            <GroupBody $pl={17} $gap={8}>
              <BigButton $w={120} $top={6}>
                <PivotChartIcon />
                PivotChart
              </BigButton>
              <BigButton $w={160} $top={10} $iconGap={6}>
                <RecommendIcon />
                Recommended
                <br />
                PivotTables
              </BigButton>
            </GroupBody>
          </Group>

          <Group $w={242}>
            <GroupBody $pl={18}>
              <Column>
                <OutlineButton $w={156} $pl={10} $gap={14}><FieldListIcon />Field List</OutlineButton>
                <OutlineButton $w={187} $pl={5} $gap={8}><PlusMinusIcon />+/- Buttons</OutlineButton>
                <OutlineButton $w={208} $pl={5} $gap={9}><FieldHeadersIcon />Field Headers</OutlineButton>
              </Column>
            </GroupBody>
            <GroupLabel>Show</GroupLabel>
          </Group>

          <RibbonEnd><Chevron size={22} w={1} color="#262626" /></RibbonEnd>
        </Ribbon>

        <FormulaBar>
          <BarBox $w={201} $pl={6} $pr={12} $between>
            A3
            <Chevron size={18} w={1.4} />
          </BarBox>
          <Dots><i /><i /><i /></Dots>
          <BarBox $w={168} $pl={13} $gap={16}>
            <XIcon />
            <CheckIcon />
            <svg width="62" height="40" viewBox="0 0 62 40">
              <FxText x="3" y="30" size="34" color="#303030" />
              <path d="M42 15 L51 27 L60 15" fill="none" stroke="#a0a0a0" strokeWidth="1.5" />
            </svg>
          </BarBox>
          <BarBox $ml={9} $pl={21} $pr={2} $between>
            Row Labels
            <Chevron size={18} w={1.2} />
          </BarBox>
        </FormulaBar>

        <Main>
          <SheetGrid />
          <ScrollStrip><ScrollThumb /></ScrollStrip>
          <FieldsPane />
        </Main>

        <MenuPopup />
        <RedMark />
      </Page>
    </>
  );
}
